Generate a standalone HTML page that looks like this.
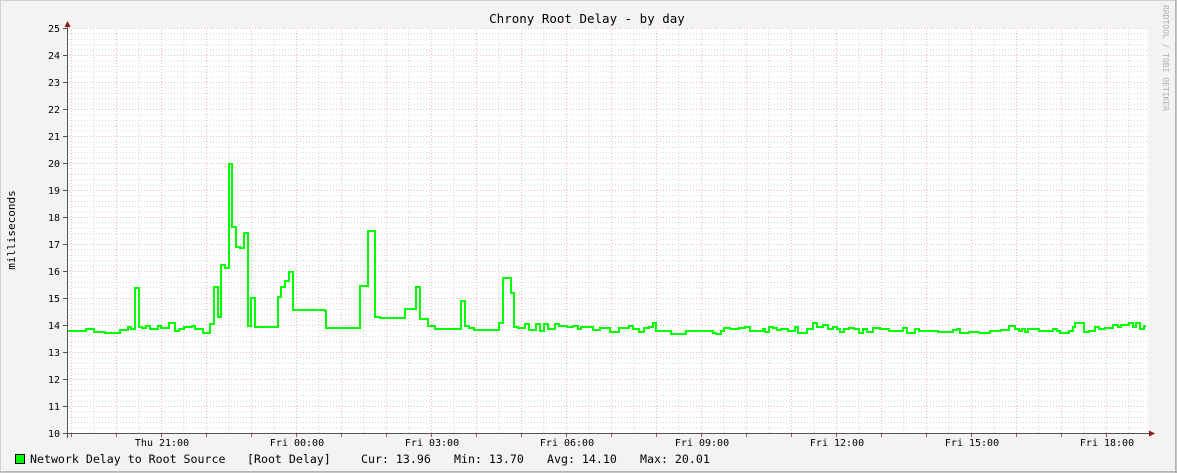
<!DOCTYPE html>
<html><head><style>
html,body{margin:0;padding:0;background:#f3f3f3}
svg{display:block}
text{font-family:"DejaVu Sans Mono","Liberation Mono",monospace;font-size:10px;fill:#000}
text.lg{font-size:11.6px}
</style></head><body>
<svg width="1177" height="473" viewBox="0 0 1177 473" xmlns="http://www.w3.org/2000/svg">
<defs>
<pattern id="hmin" patternUnits="userSpaceOnUse" x="0" y="28" width="1177" height="5.4">
<line x1="0" y1="0.5" x2="1177" y2="0.5" stroke="#d4d4d4" stroke-width="1" stroke-dasharray="1,2"/></pattern>
<pattern id="vmin" patternUnits="userSpaceOnUse" x="93.5" y="0" width="45" height="473">
<line x1="0.5" y1="0" x2="0.5" y2="473" stroke="#d4d4d4" stroke-width="1" stroke-dasharray="1,2"/></pattern>
<pattern id="hmaj" patternUnits="userSpaceOnUse" x="0" y="28" width="1177" height="27">
<line x1="0" y1="0.5" x2="1177" y2="0.5" stroke="#ebb8b8" stroke-width="1" stroke-dasharray="1,2"/></pattern>
<pattern id="vmaj" patternUnits="userSpaceOnUse" x="71" y="0" width="45" height="473">
<line x1="0.5" y1="0" x2="0.5" y2="473" stroke="#ebb8b8" stroke-width="1" stroke-dasharray="1,2"/></pattern>
</defs>
<rect x="0" y="0" width="1177" height="473" fill="#f3f3f3"/>
<rect x="0.5" y="0.5" width="1175" height="471" fill="none" stroke="#cfcfcf"/>
<line x1="1176" y1="0" x2="1176" y2="473" stroke="#999"/>
<line x1="0" y1="472" x2="1177" y2="472" stroke="#999"/>
<rect x="67" y="28" width="1081" height="405" fill="#fff"/>
<rect x="67" y="28" width="1081" height="405" fill="url(#hmin)"/>
<rect x="67" y="28" width="1081" height="405" fill="url(#vmin)"/>
<rect x="67" y="28" width="1081" height="405" fill="url(#hmaj)"/>
<rect x="67" y="28" width="1081" height="405" fill="url(#vmaj)"/>
<text x="587" y="23" text-anchor="middle" style="font-size:12.5px">Chrony Root Delay - by day</text>
<text transform="translate(1163,5) rotate(90)" style="font-size:8px;fill:#b0b0b0">RRDTOOL / TOBI OETIKER</text>
<text transform="translate(15,230) rotate(-90)" text-anchor="middle" style="font-size:11px">milliseconds</text>
<g text-anchor="end">
<text x="60" y="32">25</text><text x="60" y="59">24</text><text x="60" y="86">23</text><text x="60" y="113">22</text><text x="60" y="140">21</text><text x="60" y="167">20</text><text x="60" y="194">19</text><text x="60" y="221">18</text><text x="60" y="248">17</text><text x="60" y="275">16</text><text x="60" y="302">15</text><text x="60" y="329">14</text><text x="60" y="356">13</text><text x="60" y="383">12</text><text x="60" y="410">11</text><text x="60" y="437">10</text>
</g>
<g stroke="#555" stroke-width="1">
<path d="M63 28.5h4M63 55.5h4M63 82.5h4M63 109.5h4M63 136.5h4M63 163.5h4M63 190.5h4M63 217.5h4M63 244.5h4M63 271.5h4M63 298.5h4M63 325.5h4M63 352.5h4M63 379.5h4M63 406.5h4M63 433.5h4"/>
</g>
<g stroke="#b05050" stroke-width="1">
<path d="M71.5 434v3M116.5 434v3M161.5 434v3M206.5 434v3M251.5 434v3M296.5 434v3M341.5 434v3M386.5 434v3M431.5 434v3M476.5 434v3M521.5 434v3M566.5 434v3M611.5 434v3M656.5 434v3M701.5 434v3M746.5 434v3M791.5 434v3M836.5 434v3M881.5 434v3M926.5 434v3M971.5 434v3M1016.5 434v3M1061.5 434v3M1106.5 434v3"/>
</g>
<g text-anchor="middle">
<text x="162" y="446">Thu 21:00</text><text x="297" y="446">Fri 00:00</text><text x="432" y="446">Fri 03:00</text><text x="567" y="446">Fri 06:00</text><text x="702" y="446">Fri 09:00</text><text x="837" y="446">Fri 12:00</text><text x="972" y="446">Fri 15:00</text><text x="1107" y="446">Fri 18:00</text>
</g>
<polyline fill="none" stroke="#00ff00" stroke-width="2" points="67,331 86,331 86,329 94,329 94,332 105,332 105,333 120,333 120,330 128,330 128,327 131,327 131,329 135,329 135,288 139,288 139,327 142,327 142,328 146,328 146,326 150,326 150,329 154,329 154,329 158,329 158,326 161,326 161,328 169,328 169,323 175,323 175,331 179,331 179,329 184,329 184,327 189,327 189,327 192,327 192,326 195,326 195,329 203,329 203,333 210,333 210,324 214,324 214,287 218,287 218,317 221,317 221,265 225,265 225,268 229,268 229,164 232,164 232,227 236,227 236,247 240,247 240,248 244,248 244,233 248,233 248,326 251,326 251,298 255,298 255,327 278,327 278,297 281,297 281,287 285,287 285,281 289,281 289,272 293,272 293,310 325,310 325,311 326,311 326,328 360,328 360,286 368,286 368,231 375,231 375,317 380,317 380,318 405,318 405,309 416,309 416,287 420,287 420,319 428,319 428,326 435,326 435,329 461,329 461,301 465,301 465,326 469,326 469,328 474,328 474,330 499,330 499,323 503,323 503,278 511,278 511,293 514,293 514,327 518,327 518,328 525,328 525,324 529,324 529,330 536,330 536,324 540,324 540,331 544,331 544,324 548,324 548,329 555,329 555,324 559,324 559,326 567,326 567,327 573,327 573,326 578,326 578,329 581,329 581,327 593,327 593,330 600,330 600,328 610,328 610,332 619,332 619,328 629,328 629,326 633,326 633,329 639,329 639,332 644,332 644,328 649,328 649,327 653,327 653,323 656,323 656,331 671,331 671,334 686,334 686,331 713,331 713,333 716,333 716,334 721,334 721,331 724,331 724,328 730,328 730,329 739,329 739,328 745,328 745,327 750,327 750,331 763,331 763,329 765,329 765,332 769,332 769,327 773,327 773,328 777,328 777,330 781,330 781,329 788,329 788,331 795,331 795,327 798,327 798,333 807,333 807,329 813,329 813,323 817,323 817,327 823,327 823,325 828,325 828,329 833,329 833,327 837,327 837,329 840,329 840,332 844,332 844,329 849,329 849,328 854,328 854,329 859,329 859,333 863,333 863,329 867,329 867,332 873,332 873,328 880,328 880,329 889,329 889,331 903,331 903,328 907,328 907,333 915,333 915,329 919,329 919,331 938,331 938,332 953,332 953,330 957,330 957,329 960,329 960,333 969,333 969,332 979,332 979,333 990,333 990,331 1001,331 1001,330 1009,330 1009,326 1015,326 1015,329 1019,329 1019,331 1022,331 1022,329 1025,329 1025,332 1028,332 1028,329 1039,329 1039,331 1053,331 1053,329 1057,329 1057,331 1060,331 1060,333 1069,333 1069,331 1073,331 1073,327 1075,327 1075,323 1084,323 1084,332 1089,332 1089,331 1095,331 1095,327 1099,327 1099,329 1105,329 1105,328 1113,328 1113,325 1118,325 1118,327 1121,327 1121,325 1129,325 1129,323 1133,323 1133,327 1136,327 1136,323 1140,323 1140,329 1144,329 1144,326 1146,326"/>
<line x1="67.5" y1="24" x2="67.5" y2="438" stroke="#555"/>
<line x1="63" y1="433.5" x2="1151" y2="433.5" stroke="#555"/>
<path d="M64.5 27 L67.5 21 L70.5 27 Z" fill="#8b1a1a"/>
<path d="M1149 430.5 L1155 433.5 L1149 436.5 Z" fill="#8b1a1a"/>
<rect x="15.5" y="454.5" width="9" height="9" fill="#00ff00" stroke="#000"/>
<text class="lg" x="30" y="463">Network Delay to Root Source</text>
<text class="lg" x="247" y="463">[Root Delay]</text>
<text class="lg" x="361" y="463">Cur: 13.96</text>
<text class="lg" x="454" y="463">Min: 13.70</text>
<text class="lg" x="547" y="463">Avg: 14.10</text>
<text class="lg" x="640" y="463">Max: 20.01</text>
</svg>
</body></html>
